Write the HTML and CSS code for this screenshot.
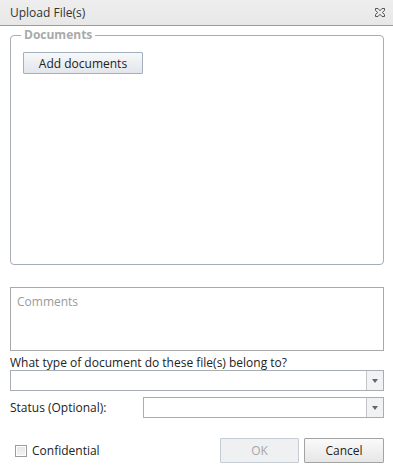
FILE: index.html
```html
<!DOCTYPE html>
<html lang="en">
<head>
    <meta charset="UTF-8">
    <meta name="viewport" content="width=device-width, initial-scale=1.0">
    <title>Upload File(s)</title>
    <link rel="stylesheet" href="styles.css">
</head>
<body>
    <div class="dialog">
        <div class="titlebar">
            <span class="title">Upload File(s)</span>
            <button type="button" class="close-button" title="Close">
                <svg width="12" height="11" viewBox="0 0 12 11">
                    <path d="M1.5 1.5h2.5l2 2.2 2-2.2h2.5v2l-2.2 2 2.2 2v2h-2.5l-2-2.2-2 2.2h-2.5v-2l2.2-2-2.2-2z" fill="none" stroke="#555" stroke-width="1"/>
                </svg>
            </button>
        </div>

        <div class="content">
            <fieldset class="documents">
                <legend>Documents</legend>
                <button type="button" class="btn add-button">Add documents</button>
            </fieldset>

            <textarea class="comments" placeholder="Comments"></textarea>

            <label class="question">What type of document do these file(s) belong to?</label>
            <div class="select">
                <span class="select-value"></span>
                <span class="select-arrow"></span>
            </div>

            <div class="status-row">
                <label class="status-label">Status (Optional):</label>
                <div class="select status-select">
                    <span class="select-value"></span>
                    <span class="select-arrow"></span>
                </div>
            </div>

            <div class="footer">
                <label class="confidential">
                    <span class="checkbox"></span>
                    Confidential
                </label>
                <div class="actions">
                    <button type="button" class="btn ok-button" disabled>OK</button>
                    <button type="button" class="btn cancel-button">Cancel</button>
                </div>
            </div>
        </div>
    </div>
</body>
</html>
```

FILE: styles.css
```css
* {
    margin: 0;
    padding: 0;
    box-sizing: border-box;
}

body {
    font-family: "Open Sans", "Liberation Sans", sans-serif;
    font-size: 12px;
    color: #222;
    background: #fff;
}

.dialog {
    width: 393px;
    height: 469px;
    background: #fff;
}

.titlebar {
    height: 26px;
    display: flex;
    align-items: center;
    justify-content: space-between;
    padding: 0 6px 0 10px;
    background: linear-gradient(#eeeeee, #e8e8e8);
    border-bottom: 1px solid #9c9c9c;
}

.title {
    color: #333;
}

.close-button {
    width: 14px;
    height: 13px;
    border: none;
    background: none;
    display: flex;
    align-items: center;
    justify-content: center;
}

.content {
    padding: 3px 9px 0 10px;
}

.documents {
    height: 236px;
    border: 1px solid #a7adb6;
    border-radius: 4px;
    padding: 7px 12px;
}

.documents legend {
    margin-left: -2px;
    padding: 0 3px;
    font-weight: bold;
    color: #a9a9a9;
    line-height: 12px;
}

.btn {
    font-family: inherit;
    font-size: 12px;
    height: 22px;
    border-radius: 1px;
    cursor: pointer;
}

.add-button {
    width: 120px;
    margin-top: 4px;
    color: #222;
    border: 1px solid #a4afbe;
    background: linear-gradient(#f7f8f9, #e2e6eb);
}

.comments {
    display: block;
    width: 374px;
    height: 64px;
    margin-top: 22px;
    border: 1px solid #a9a9a9;
    padding: 5px 6px;
    font-family: inherit;
    font-size: 12px;
    resize: none;
}

.comments::placeholder {
    color: #9a9a9a;
}

.question {
    display: block;
    margin-top: 5px;
    line-height: 14px;
}

.select {
    display: flex;
    height: 21px;
    border: 1px solid #a8adb4;
    background: #fff;
}

.select-value {
    flex: 1;
}

.select-arrow {
    width: 17px;
    border-left: 1px solid #c3c7cc;
    background: #f1f2f3;
    display: flex;
    align-items: center;
    justify-content: center;
}

.select-arrow::after {
    content: "";
    border-left: 3px solid transparent;
    border-right: 3px solid transparent;
    border-top: 4px solid #666;
}

.status-row {
    display: flex;
    align-items: center;
    margin-top: 6px;
}

.status-label {
    width: 133px;
}

.status-select {
    flex: 1;
}

.footer {
    display: flex;
    align-items: center;
    justify-content: space-between;
    margin-top: 20px;
}

.confidential {
    display: flex;
    align-items: center;
    gap: 5px;
    margin-left: 5px;
}

.checkbox {
    width: 12px;
    height: 12px;
    border: 1px solid #9c9c9c;
    background: linear-gradient(#e6e6e6, #f4f4f4);
    box-shadow: inset 0 0 0 1px #fff;
}

.actions {
    display: flex;
    gap: 5px;
}

.ok-button,
.cancel-button {
    width: 80px;
    height: 25px;
}

.ok-button {
    width: 79px;
    color: #a8a8a8;
    border: 1px solid #c6ccd3;
    background: #eef0f2;
    cursor: default;
}

.cancel-button {
    color: #222;
    border: 1px solid #a3a3a3;
    background: linear-gradient(#fafafa, #e6e6e6);
}
```
